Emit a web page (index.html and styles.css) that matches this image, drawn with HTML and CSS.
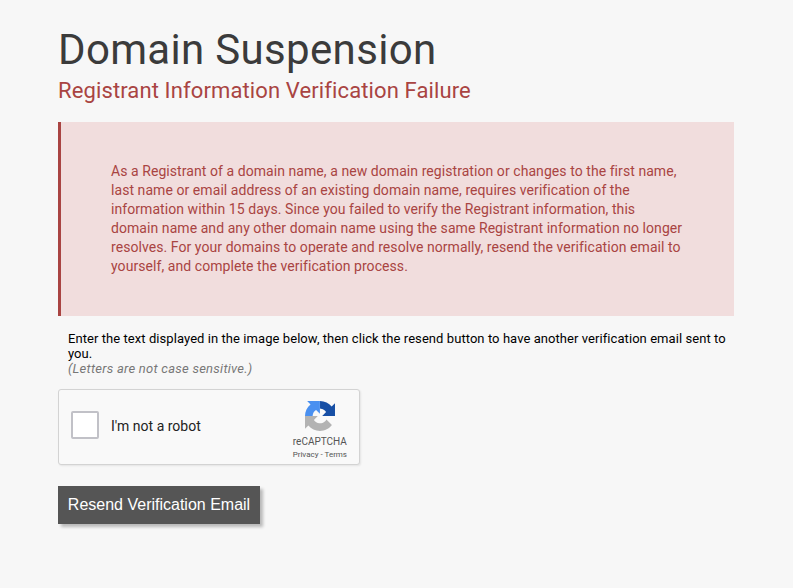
FILE: index.html
```html
<!DOCTYPE html>
<html lang="en">
<head>
    <meta charset="UTF-8">
    <meta name="viewport" content="width=device-width, initial-scale=1.0">
    <title>Domain Suspension</title>
    <link rel="stylesheet" href="styles.css">
</head>
<body>
    <div class="container">
        <h1>Domain Suspension</h1>
        <h2>Registrant Information Verification Failure</h2>

        <div class="alert">
            <p>As a Registrant of a domain name, a new domain registration or changes to the first name, last name or email address of an existing domain name, requires verification of the information within 15 days. Since you failed to verify the Registrant information, this domain name and any other domain name using the same Registrant information no longer resolves. For your domains to operate and resolve normally, resend the verification email to yourself, and complete the verification process.</p>
        </div>

        <form>
            <p class="instructions">
                Enter the text displayed in the image below, then click the resend button to have another verification email sent to you.<br>
                <em>(Letters are not case sensitive.)</em>
            </p>

            <div class="captcha">
                <span class="captcha-box" role="checkbox" aria-checked="false" tabindex="0"></span>
                <span class="captcha-label">I'm not a robot</span>
                <div class="captcha-brand">
                    <svg class="captcha-logo" viewBox="0 0 64 64">
                        <path fill="#174fa5" d="M64 31.955l-.033-1.37V4.687l-7.16 7.16C50.948 4.674 42.033.093 32.05.093v16.1c.485 0 .86.057 1.135.163 4.976.393 9.288 3.14 11.828 7.124l-8.307 8.307L64 31.953"/>
                        <path fill="#4a90f0" d="M31.862.094l-1.37.033H4.594l7.16 7.16C4.58 13.147 0 22.06 0 32.046h16.26c0-.485.057-.86.163-1.135.393-4.976 3.14-9.288 7.124-11.828l8.307 8.307L31.86.095"/>
                        <path fill="#b3b3b3" d="M.001 32.045l.033 1.37v25.898l7.16-7.16c5.86 7.173 14.774 11.754 24.76 11.754 10.4 0 19.622-4.96 25.458-12.64l-11.736-11.86a15.55 15.55 0 0 1-4.754 5.334c-2.05 1.6-4.952 2.906-8.968 2.906-.485 0-.86-.057-1.135-.163-4.976-.393-9.288-3.14-11.828-7.124l8.307-8.307L0 32.047"/>
                    </svg>
                    <div class="captcha-name">reCAPTCHA</div>
                    <div class="captcha-links">Privacy - Terms</div>
                </div>
            </div>

            <button type="button" class="resend-btn">Resend Verification Email</button>
        </form>
    </div>
</body>
</html>
```
FILE: styles.css
```css
body {
    font-family: Roboto, Arial, sans-serif;
    background: #f7f7f7;
    margin: 0;
}

.container {
    width: 676px;
    padding: 25px 0 40px 58px;
}

h1 {
    color: #3b3b3b;
    font-size: 42px;
    font-weight: 400;
    line-height: 49px;
    letter-spacing: 0.33px;
    margin: 0;
}

h2 {
    color: #a94442;
    font-size: 22px;
    font-weight: 400;
    line-height: 34px;
    letter-spacing: 0.12px;
    margin: 0 0 14px;
}

.alert {
    background: #f1dddd;
    border-left: 3px solid #a94442;
    color: #a94442;
    padding: 40px 50px;
    height: 114px;
}

.alert p {
    font-size: 14px;
    line-height: 19px;
    letter-spacing: 0.065px;
    margin: 0;
}

.instructions {
    color: #000;
    font-size: 13px;
    line-height: 15px;
    letter-spacing: 0.067px;
    margin: 15px 0 13px;
    padding: 0 0 0 10px;
}

.instructions em {
    color: #777;
    letter-spacing: 0.25px;
}

.captcha {
    display: flex;
    align-items: center;
    box-sizing: border-box;
    width: 302px;
    height: 76px;
    padding: 0 12px 0 12px;
    background: #f9f9f9;
    border: 1px solid #d3d3d3;
    border-radius: 3px;
    box-shadow: 1px 1px 2px rgba(0,0,0,0.08);
}

.captcha-box {
    box-sizing: border-box;
    width: 28px;
    height: 28px;
    margin-top: -4px;
    background: white;
    border: 2px solid #c1c1c7;
    border-radius: 2px;
}

.captcha-label {
    margin: -3px 0 0 12px;
    font-size: 14px;
    color: #222;
}

.captcha-brand {
    margin-left: auto;
    text-align: center;
    color: #555;
}

.captcha-logo {
    display: block;
    width: 30px;
    height: 30px;
    margin: 8px auto 5px;
}

.captcha-name {
    font-size: 10px;
    line-height: 12px;
}

.captcha-links {
    font-size: 8px;
    line-height: 13px;
}

.resend-btn {
    display: block;
    width: 202px;
    height: 38px;
    margin-top: 21px;
    padding: 0;
    background: #555;
    color: white;
    border: none;
    box-shadow: 3px 3px 3px rgba(0,0,0,0.25);
    font-family: "Liberation Sans", Arial, sans-serif;
    font-size: 16px;
    cursor: pointer;
}
```
